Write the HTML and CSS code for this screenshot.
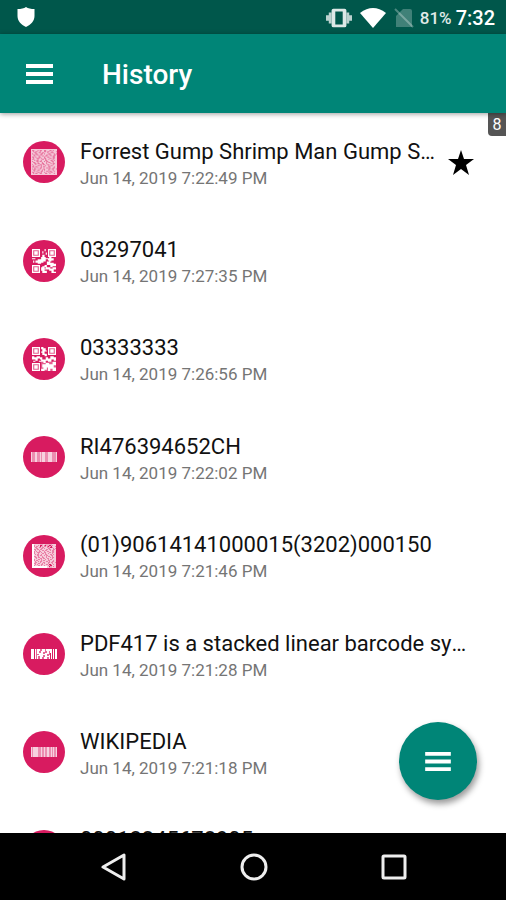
FILE: index.html
```html
<!DOCTYPE html>
<html lang="en">
<head>
<meta charset="utf-8">
<meta name="viewport" content="width=device-width, initial-scale=1">
<title>History</title>
<link rel="stylesheet" href="styles.css">
</head>
<body>
<svg class="defs" aria-hidden="true">
  <symbol id="menu" viewBox="0 0 27 20"><path d="M0 0h27v4H0zM0 8h27v4H0zM0 16h27v4H0z"/></symbol>
  <symbol id="finder" viewBox="0 0 7 7"><path fill-rule="evenodd" d="M0 0h7v7H0zM1 1v5h5V1zM2 2h3v3H2z"/></symbol>
  <symbol id="noise" viewBox="0 0 24 24"><path stroke="currentColor" fill="none" d="M0 .5h24M0 1.5h1m2 0h3m1 0h1m2 0h2m2 0h3m2 0h1m1 0h3M0 2.500h2m1 0h1m2 0h2m1 0h3m2 0h1m2 0h2m1 0h3M0 3.500h3m2 0h2m2 0h1m2 0h3m1 0h2m3 0h3M0 4.500h1m1 0h2m2 0h3m2 0h1m1 0h3m2 0h3m1 0h1M0 5.500h2m2 0h1m2 0h1m2 0h4m2 0h1m2 0h2m2 0h1M0 6.500h3m1 0h3m1 0h2m2 0h1m2 0h3m1 0h1m2 0h2M0 7.500h1m2 0h1m1 0h2m2 0h3m1 0h2m2 0h3m2 0h2M0 8.500h2m1 0h2m3 0h1m1 0h2m2 0h3m2 0h1m2 0h2M0 9.500h1m2 0h3m1 0h3m2 0h1m1 0h2m1 0h3m1 0h3M0 10.500h3m1 0h1m2 0h2m1 0h3m2 0h3m2 0h1m1 0h3M0 11.500h1m1 0h3m2 0h1m2 0h2m1 0h1m2 0h3m2 0h3M0 12.500h2m2 0h2m1 0h3m1 0h3m1 0h1m2 0h2m1 0h3M0 13.500h3m2 0h1m2 0h2m2 0h2m1 0h3m1 0h1m2 0h2M0 14.500h1m1 0h2m1 0h3m2 0h1m2 0h2m2 0h3m1 0h3M0 15.500h2m1 0h3m2 0h1m1 0h3m1 0h2m1 0h1m2 0h4M0 16.500h1m2 0h1m2 0h3m1 0h1m2 0h3m2 0h3m1 0h2M0 17.500h3m1 0h2m1 0h1m2 0h4m2 0h1m1 0h2m2 0h2M0 18.500h1m1 0h1m2 0h3m1 0h2m2 0h3m2 0h1m2 0h2M0 19.500h2m2 0h2m2 0h2m1 0h1m1 0h3m1 0h3m1 0h3M0 20.500h3m1 0h1m1 0h3m2 0h3m2 0h1m2 0h2m1 0h2M0 21.500h1m2 0h3m2 0h1m1 0h2m1 0h3m1 0h1m2 0h4M0 22.500h2m1 0h1m2 0h2m2 0h3m2 0h2m1 0h3m1 0h2M0 23.500h24"/></symbol>
  <symbol id="aztec" viewBox="0 0 24 24"><use href="#noise" opacity=".6"/><rect width="24" height="24" opacity=".4"/></symbol>
  <symbol id="qr-a" viewBox="0 0 21 21">
    <path d="M0 0h7v7H0zM14 0h7v7h-7zM0 14h7v7H0z" opacity=".3"/>
    <use href="#finder" width="7" height="7"/><use href="#finder" x="14" width="7" height="7"/><use href="#finder" y="14" width="7" height="7"/>
    <path d="M11 0h1v2h-1zM9 2h1v2H9zM12 3h1v2h-2v2H9V5h3zM8 7h4v1h3v1h-3v2h-2v1H8v1H5v-1H3v-2h2V9h3zM0 8h3v1H0zM1 10h1v2H1zM15 7h2v1h2v2h-2v1h-2v-1h-1V9h1zM13 11h3v1h3v1h2v2h-3v1h-2v-2h-3v2h-2v2H9v-3h2v-1h2zM8 16h1v1h3v-1h2v2h-3v1h2v2H9v-2H8zM14 16h2v1h2v-1h3v2h-2v2h2v1h-4v-2h-2v-1h-1z"/>
  </symbol>
  <symbol id="qr-b" viewBox="0 0 21 21">
    <path d="M0 0h7v7H0zM14 0h7v7h-7zM0 14h7v7H0zM8 13h13v8H8z" opacity=".3"/>
    <use href="#finder" width="7" height="7"/><use href="#finder" x="14" width="7" height="7"/><use href="#finder" y="14" width="7" height="7"/>
    <path d="M8 0h2v1h2v2h1v1h-2v2h2v2h-2V7H9V5H8V4h1V2H8zM0 8h2v1h2V8h3v1h2v2H7v-1H5v2H3v-1H0zM1 12h2v1H1zM6 12h2v-1h4V9h2v1h2V8h3v1h2v3h-2v-1h-2v2h-3v-1h-2v2h-2v-1H6zM9 15h3v-1h3v1h3v-2h3v3h-2v2h2v3h-3v-2h-2v2h-2v-3h-1v2h-2v1H8v-2h2v-1H9z"/>
  </symbol>
  <symbol id="matrix" viewBox="0 0 24 24"><path d="M0 0h8v3h3V0h2v2h3v2h4V0h4v24h-4v-4h-3v4H0z" opacity=".45"/><path d="M0 0h2v24H0zM0 22h15v2H0z"/><use href="#noise" opacity=".6"/></symbol>
  <symbol id="pdf417" viewBox="0 0 26 10"><path d="M5 0h14v10H5z" opacity=".35"/><path d="M0 0h3v10H0zM4 0h1v10H4zM6 0h3v2H8v2h2V2h1V0h3v3h-2v2h2V4h2V2h-1V0h4v2h-1v3h-2v2h2v1h-2v2h-3V8h1V6h-2v2h-1v2H9V7H7v3H6V6h2V5H6zM19 0h2v10h-1V4h-1zM22 0h1v10h-1zM24 0h2v10h-2zM18 6h1v4h-1z"/></symbol>
  <symbol id="code128" viewBox="0 0 26 10"><path d="M0 0h26v10H0z" opacity=".5"/><path d="M0 0h1v10H0zM4 0h2v10H4zM9 0h1v10H9zM11 0h3v10h-3zM17 0h4v10h-4zM25 0h1v10h-1z" opacity=".6"/></symbol>
  <symbol id="code39" viewBox="0 0 26 10"><path d="M0 0h26v10H0z" opacity=".5"/><path d="M0 0h1v10H0zM2 0h5v10H2zM10 0h1v10h-1zM13 0h1v10h-1zM16 0h2v10h-2zM20 0h1v10h-1zM22 0h1v10h-1zM25 0h1v10h-1z" opacity=".6"/></symbol>
</svg>
<div class="screen">
  <div class="status">
    <svg class="shield" viewBox="0 0 18 20" aria-hidden="true"><path d="M9 0c2 1.500 5 2 8.500 2v7c0 5-3.500 8.500-8.500 11C4 17.500.5 14 .5 9V2C4 2 7 1.500 9 0z"/></svg>
    <div class="indicators">
      <svg class="vibrate" viewBox="0 0 28 20" aria-hidden="true"><path fill-rule="evenodd" d="M8 0h12q2 0 2 2v16q0 2-2 2H8q-2 0-2-2V2q0-2 2-2zM10 3v14h8V3z"/><path d="M3 4h3v12H3zM0 7h3v6H0zM22 4h3v12h-3zM25 7h3v6h-3z" opacity=".85"/></svg>
      <svg class="wifi" viewBox="0 0 26 20" aria-hidden="true"><path d="M0 5Q13-5 26 5L13 20z"/></svg>
      <svg class="sim" viewBox="0 0 20 20" aria-hidden="true"><path d="M9 1h7q2 0 2 2v16H2V8z" opacity=".25"/><path d="M1 1l18 18" fill="none" stroke="currentColor" stroke-width="2" opacity=".3"/></svg>
      <span class="battery">81%</span>
      <span class="clock">7:32</span>
    </div>
  </div>
  <header class="appbar">
    <button class="icon-button" aria-label="Open menu"><svg class="menu-icon" aria-hidden="true"><use href="#menu"/></svg></button>
    <h1>History</h1>
  </header>
  <main class="content">
    <ul class="history">
      <li><span class="badge"><svg class="square large"><use href="#aztec"/></svg></span><div class="entry"><h2>Forrest Gump Shrimp Man Gump Shrimp</h2><p>Jun 14, 2019 7:22:49 PM</p></div><svg class="star" viewBox="0 0 26 25" role="img" aria-label="Favorite"><path d="M13 0l3 9h10l-8 6 3 10-8-6-8 6 3-10-8-6h10z"/></svg></li>
      <li><span class="badge"><svg class="square"><use href="#qr-a"/></svg></span><div class="entry"><h2>03297041</h2><p>Jun 14, 2019 7:27:35 PM</p></div></li>
      <li><span class="badge"><svg class="square"><use href="#qr-b"/></svg></span><div class="entry"><h2>03333333</h2><p>Jun 14, 2019 7:26:56 PM</p></div></li>
      <li><span class="badge"><svg class="linear"><use href="#code128"/></svg></span><div class="entry"><h2>RI476394652CH</h2><p>Jun 14, 2019 7:22:02 PM</p></div></li>
      <li><span class="badge"><svg class="square"><use href="#matrix"/></svg></span><div class="entry"><h2>(01)90614141000015(3202)000150</h2><p>Jun 14, 2019 7:21:46 PM</p></div></li>
      <li><span class="badge"><svg class="linear"><use href="#pdf417"/></svg></span><div class="entry"><h2>PDF417 is a stacked linear barcode symbol</h2><p>Jun 14, 2019 7:21:28 PM</p></div></li>
      <li><span class="badge"><svg class="linear"><use href="#code39"/></svg></span><div class="entry"><h2>WIKIPEDIA</h2><p>Jun 14, 2019 7:21:18 PM</p></div></li>
      <li><span class="badge"><svg class="linear"><use href="#code128"/></svg></span><div class="entry"><h2>00012345678905</h2><p>&nbsp;</p></div></li>
    </ul>
    <span class="count">8</span>
    <button class="fab" aria-label="Actions"><svg class="fab-icon" aria-hidden="true"><use href="#menu"/></svg></button>
  </main>
  <nav class="navbar" aria-label="System">
    <button aria-label="Back"><svg viewBox="0 0 28 28"><path d="M24 2v24L3 14z"/></svg></button>
    <button aria-label="Home"><svg viewBox="0 0 28 28"><circle cx="14" cy="14" r="12"/></svg></button>
    <button aria-label="Recent apps"><svg viewBox="0 0 28 28"><rect x="3" y="3" width="22" height="22" rx="1"/></svg></button>
  </nav>
</div>
</body>
</html>
```
FILE: styles.css
```css
* { box-sizing: border-box; margin: 0; padding: 0; }

body { font-family: Roboto, "Liberation Sans", sans-serif; background: #fff; color: #111; }

button { border: 0; background: none; color: inherit; font: inherit; cursor: pointer; }
svg { display: block; flex: none; fill: currentColor; }
.defs { position: absolute; width: 0; height: 0; }

.screen { display: flex; flex-direction: column; height: 100vh; }

.status { display: flex; align-items: center; justify-content: space-between; height: 34px; padding: 0 11px 0 17px; background: #00574b; color: #fff; }
.shield { width: 18px; height: 20px; }
.indicators { display: flex; align-items: center; gap: 8px; padding-top: 1px; }
.vibrate { width: 26px; height: 20px; color: #dce8e6; }
.wifi { width: 26px; height: 20px; }
.sim { width: 20px; height: 20px; }
.battery { margin-left: -2px; font-size: 17px; font-weight: 500; color: #e0ebe9; }
.clock { margin-left: -4px; font-size: 20px; font-weight: 500; }

.appbar { position: relative; z-index: 1; display: flex; align-items: center; gap: 49px; height: 79px; padding: 0 26px; background: #008577; color: #fff; box-shadow: 0 1px 5px rgba(0, 0, 0, .4); }
.menu-icon { width: 27px; height: 20px; }
.appbar h1 { padding-top: 2px; font-size: 28px; font-weight: 500; }

.content { position: relative; flex: 1; min-height: 0; overflow: hidden; }
/* The list runs on behind the 67px navigation bar. */
.history { display: grid; grid-auto-rows: 1fr; height: calc(100% + 67px); list-style: none; }
.history li { display: flex; align-items: center; min-width: 0; padding: 0 32px 0 23px; }
.badge { display: flex; flex: none; align-items: center; justify-content: center; width: 42px; height: 42px; margin-right: 15px; border-radius: 50%; background: #d81b60; color: #fff; }
.square { width: 24px; height: 24px; }
.square.large { width: 26px; height: 26px; }
.linear { width: 26px; height: 10px; }
.entry { flex: 1; min-width: 0; padding-top: 4px; }
.entry h2 { overflow: hidden; font-size: 22px; font-weight: 400; line-height: 28px; white-space: nowrap; text-overflow: ellipsis; }
.entry p { font-size: 17px; line-height: 25px; color: #757575; }
.star { width: 26px; height: 25px; margin-left: 4px; color: #000; }

.count { position: absolute; top: 0; right: 0; width: 18px; height: 23px; border-radius: 0 0 0 4px; background: #555; color: #fff; font-size: 16px; line-height: 24px; text-align: center; }
.fab { position: absolute; right: 29px; bottom: 33px; display: flex; align-items: center; justify-content: center; width: 78px; height: 78px; border-radius: 50%; background: #008577; color: #fff; box-shadow: 2px 4px 6px rgba(0, 0, 0, .4); }
.fab-icon { width: 26px; height: 19px; }

.navbar { display: flex; align-items: center; justify-content: center; gap: 112px; height: 67px; padding-left: 1px; background: #000; color: #eee; }
.navbar svg { width: 28px; height: 28px; fill: none; stroke: currentColor; stroke-width: 3; stroke-linejoin: round; }
```
